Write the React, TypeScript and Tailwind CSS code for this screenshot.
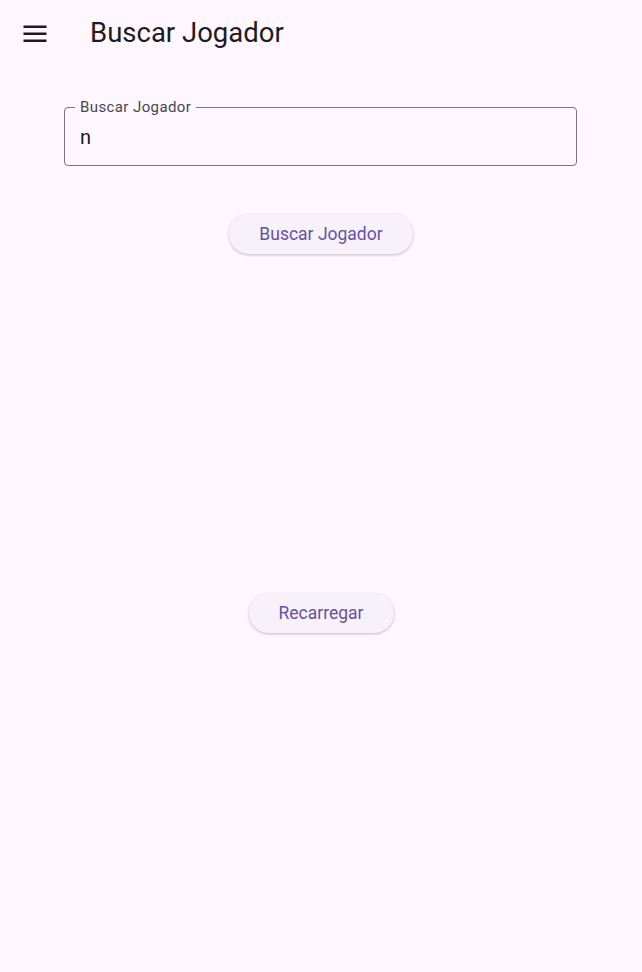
import React from 'react';

const MenuIcon = () => (
  <svg width="24" height="18" viewBox="0 0 24 18" fill="#1d1b20">
    <rect x="0.5" y="1.5" width="23" height="2.5" />
    <rect x="0.5" y="8.5" width="23" height="2.5" />
    <rect x="0.5" y="15.5" width="23" height="2.5" />
  </svg>
);

const PillButton: React.FC<{ label: string }> = ({ label }) => (
  <button className="h-10 rounded-full bg-[#f7f2fa] text-[#6750a4] text-[17.5px] px-[30px] shadow-[0_1px_3px_rgba(0,0,0,0.25)]">
    {label}
  </button>
);

export default function App() {
  return (
    <div className="flex flex-col h-[972px] w-full bg-[#fef7ff] font-['Roboto',sans-serif]">
      <header className="h-[66px] flex items-center shrink-0">
        <div className="w-[70px] flex justify-center">
          <MenuIcon />
        </div>
        <h1 className="ml-[20px] text-[27.5px] leading-8 text-[#1d1b20]">Buscar Jogador</h1>
      </header>

      <div className="pl-16 pr-[65px] pt-[41px]">
        <div className="relative h-[59px] rounded-[4px] border border-[#79747e] flex items-center px-[15px]">
          <span className="absolute -top-[11px] left-[10px] px-[5px] bg-[#fef7ff] text-[15px] leading-5 tracking-[0.4px] text-[#49454f]">
            Buscar Jogador
          </span>
          <span className="text-[20px] text-[#1d1b20] pt-[1px]">n</span>
        </div>
      </div>

      <div className="flex justify-center mt-[48px]">
        <PillButton label="Buscar Jogador" />
      </div>

      <div className="flex-1 flex items-center justify-center">
        <PillButton label="Recarregar" />
      </div>
    </div>
  );
}
